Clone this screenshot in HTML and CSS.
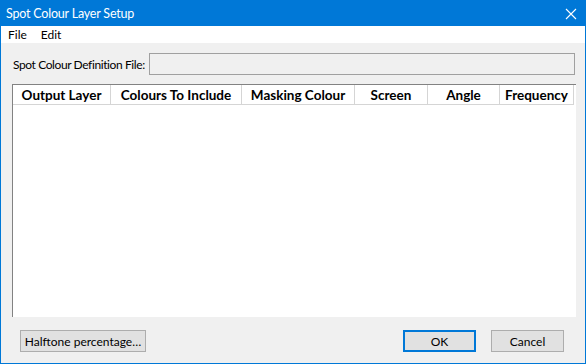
FILE: index.html
```html
<!DOCTYPE html>
<html>
<head>
<meta charset="utf-8">
<link rel="stylesheet" href="styles.css">
</head>
<body>
<div class="window">
  <div class="titlebar">
    <span class="title">Spot Colour Layer Setup</span>
    <svg class="close" width="12" height="12" viewBox="0 0 12 12"><path d="M1 1 L11 11 M11 1 L1 11" stroke="#fff" stroke-width="1.1" fill="none"/></svg>
  </div>
  <div class="menubar">
    <span class="menu">File</span>
    <span class="menu">Edit</span>
  </div>
  <div class="content">
    <div class="filerow">
      <span class="label">Spot Colour Definition File:</span>
      <div class="field"></div>
    </div>
    <div class="list">
      <div class="header">
        <div class="col c1">Output Layer</div>
        <div class="col c2">Colours To Include</div>
        <div class="col c3">Masking Colour</div>
        <div class="col c4">Screen</div>
        <div class="col c5">Angle</div>
        <div class="col c6">Frequency</div>
      </div>
    </div>
    <div class="buttons">
      <button class="btn halftone">Halftone percentage…</button>
      <div class="spacer"></div>
      <button class="btn ok">OK</button>
      <button class="btn cancel">Cancel</button>
    </div>
  </div>
</div>
</body>
</html>
```
FILE: styles.css
```css
html, body {
  margin: 0;
  padding: 0;
}
body {
  font-family: "Lato", "Noto Sans", sans-serif;
  font-size: 12px;
  color: #000;
  background: #f0f0f0;
}
.window {
  width: 586px;
  height: 364px;
  box-sizing: border-box;
  border: 1px solid #0078d7;
  border-top: none;
  display: flex;
  flex-direction: column;
  background: #f0f0f0;
}
.titlebar {
  height: 26px;
  background: #0078d7;
  color: #fff;
  display: flex;
  align-items: center;
  padding-left: 5px;
  padding-right: 8px;
  flex: none;
}
.title {
  flex: 1;
  font-size: 12.5px;
  letter-spacing: -0.2px;
}
.close {
  display: block;
  margin-top: 1px;
}
.menubar {
  height: 17px;
  background: #fff;
  display: flex;
  align-items: center;
  padding-left: 7px;
  gap: 14px;
  flex: none;
}
.content {
  flex: 1;
  display: flex;
  flex-direction: column;
  padding: 10px 9px 11px 11px;
  min-height: 0;
}
.filerow {
  display: flex;
  align-items: center;
  height: 22px;
  flex: none;
}
.label {
  width: 136px;
  padding-left: 1px;
  white-space: nowrap;
  letter-spacing: -0.4px;
}
.field {
  flex: 1;
  height: 22px;
  box-sizing: border-box;
  border: 1px solid #a0a0a0;
  background: #f0f0f0;
  margin-right: 1px;
}
.list {
  margin-top: 9px;
  flex: 1;
  background: #fff;
  border-left: 1px solid #828282;
  border-top: 1px solid #828282;
  min-height: 0;
}
.header {
  display: flex;
  height: 20px;
  background: #fff;
}
.col {
  box-sizing: border-box;
  border-right: 1px solid #d5d5d5;
  border-bottom: 1px solid #d5d5d5;
  font-weight: bold;
  font-size: 13.5px;
  text-align: center;
  line-height: 19px;
  padding-top: 1px;
  white-space: nowrap;
  overflow: hidden;
}
.c1 { width: 98px; }
.c2 { width: 131px; }
.c3 { width: 113px; }
.c4 { width: 73px; }
.c5 { width: 72px; }
.c6 { width: 74px; }
.buttons {
  margin-top: 13px;
  display: flex;
  align-items: center;
  flex: none;
  padding-left: 8px;
  padding-right: 12px;
  gap: 15px;
}
.spacer { flex: 1; }
.btn {
  font-family: inherit;
  font-size: 12px;
  color: #000;
  height: 22px;
  box-sizing: border-box;
  background: #e1e1e1;
  border: 1px solid #adadad;
  padding: 0;
  margin: 0;
  white-space: nowrap;
}
.halftone { width: 126px; }
.ok, .cancel { width: 73px; }
.ok { border: 2px solid #0078d7; }
```
